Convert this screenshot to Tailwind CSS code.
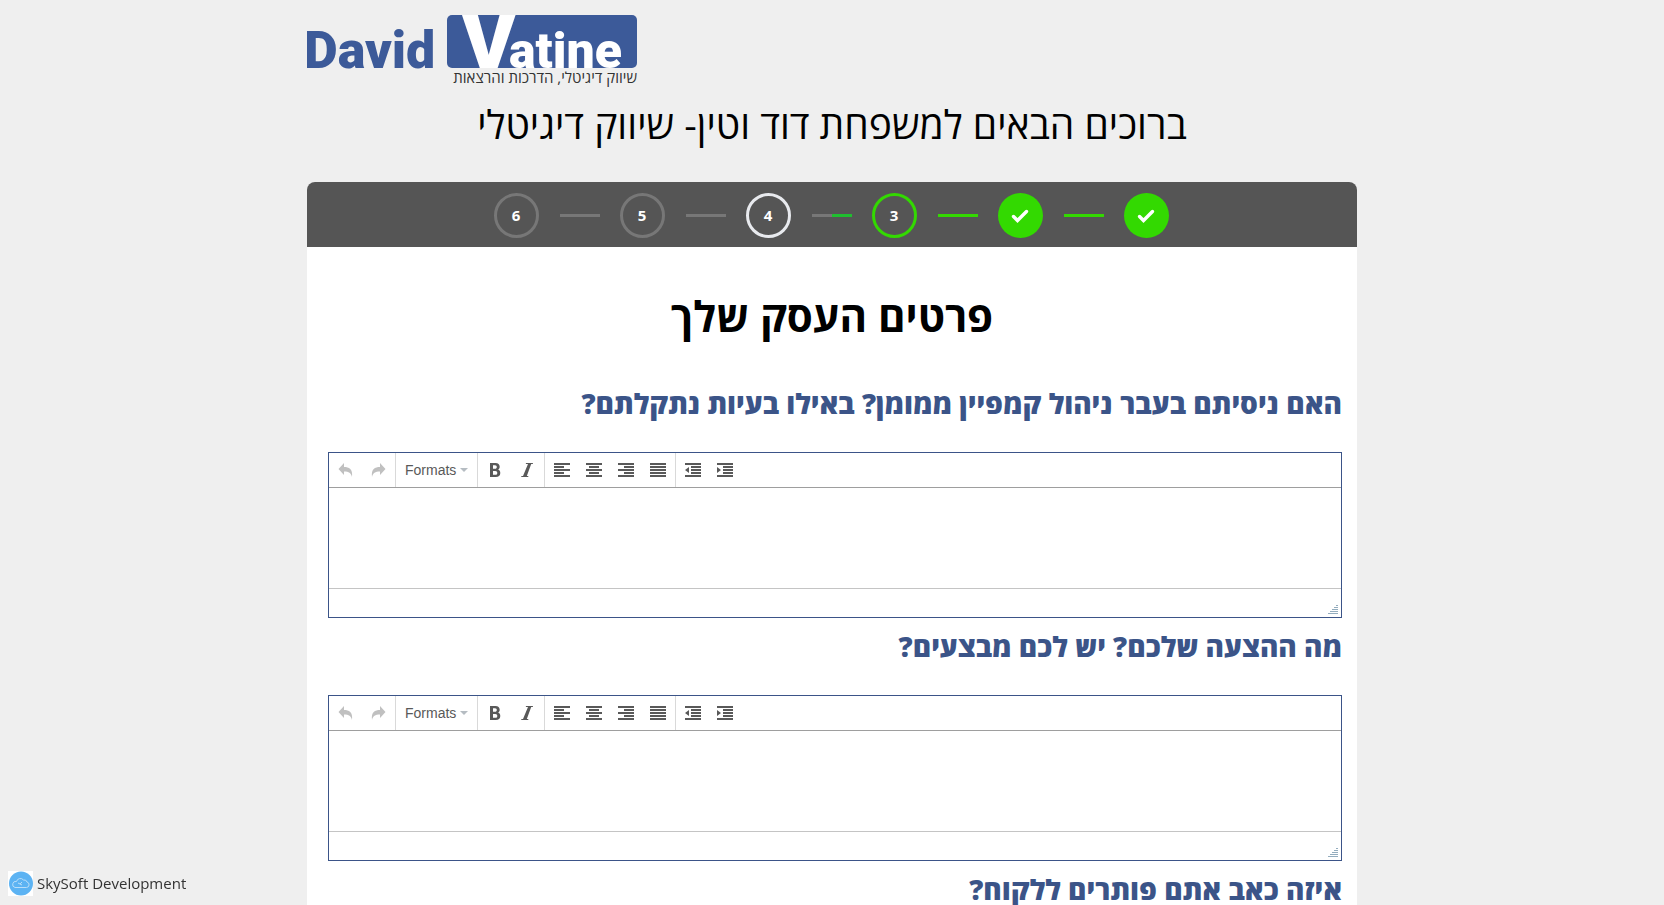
<!DOCTYPE html>
<html lang="he" dir="rtl">
<head>
<meta charset="utf-8">
<title>David Vatine</title>
<script src="https://cdn.jsdelivr.net/npm/@tailwindcss/browser@4"></script>
</head>
<body class="min-h-screen overflow-x-hidden bg-[#efefef] text-black font-['Open_Sans','Noto_Sans',sans-serif]">

<svg class="hidden" aria-hidden="true">
  <symbol id="undo" viewBox="0 0 16 16"><path d="M6 1v4c5 0 9 2 8 10-1-4-3-5.500-8-5.500V13L.5 7z"/></symbol>
  <symbol id="redo" viewBox="0 0 16 16"><path d="M10 1v4C5 5 1 7 2 15c1-4 3-5.500 8-5.500V13l5.500-6z"/></symbol>
  <symbol id="bold" viewBox="0 0 16 16"><path fill-rule="evenodd" d="M3 1h5.500c2.700 0 4.200 1.500 4.200 3.700 0 1.300-.6 2.300-1.700 2.900 1.500.5 2.300 1.700 2.300 3.300 0 2.600-1.700 4.100-4.500 4.100H3zM6 3.200v3.600h2c1.200 0 1.800-.7 1.800-1.800S9.200 3.200 8 3.200zM6 8.900v3.900h2.300c1.300 0 2-.7 2-1.900 0-1.300-.7-2-2-2z"/></symbol>
  <symbol id="italic" viewBox="0 0 16 16"><path d="M7 1h7l-.2 1h-1.600L7.800 14h1.600l-.2 1h-7l.2-1H4L9 2H6.800z"/></symbol>
  <symbol id="left" viewBox="0 0 16 14"><path d="M0 0h16v2H0zM0 3h10v2H0zM0 6h16v2H0zM0 9h10v2H0zM0 12h16v2H0z"/></symbol>
  <symbol id="center" viewBox="0 0 16 14"><path d="M0 0h16v2H0zM3 3h10v2H3zM0 6h16v2H0zM3 9h10v2H3zM0 12h16v2H0z"/></symbol>
  <symbol id="right" viewBox="0 0 16 14"><path d="M0 0h16v2H0zM6 3h10v2H6zM0 6h16v2H0zM6 9h10v2H6zM0 12h16v2H0z"/></symbol>
  <symbol id="justify" viewBox="0 0 16 14"><path d="M0 0h16v2H0zM0 3h16v2H0zM0 6h16v2H0zM0 9h16v2H0zM0 12h16v2H0z"/></symbol>
  <symbol id="outdent" viewBox="0 0 16 14"><path d="M0 0h16v2H0zM6 3h10v2H6zM6 6h10v2H6zM6 9h10v2H6zM0 12h16v2H0zM4 4v6L0 7z"/></symbol>
  <symbol id="indent" viewBox="0 0 16 14"><path d="M0 0h16v2H0zM6 3h10v2H6zM6 6h10v2H6zM6 9h10v2H6zM0 12h16v2H0zM0 4v6l4-3z"/></symbol>
  <symbol id="check" viewBox="0 0 18 14"><path d="M2.500 7.500l4 4 9-9" fill="none" stroke="#fff" stroke-width="3.400" stroke-linecap="round"/></symbol>
  <symbol id="grip" viewBox="0 0 10 10"><path d="M8 .5h2M6 2.500h4M4 4.500h6M2 6.500h8M0 8.500h10" stroke="#94adbe"/></symbol>
</svg>

<main class="mx-auto w-full max-w-[1050px]">
  <header>
    <div class="flex justify-end pt-[15px]">
      <a href="#" aria-label="David Vatine" class="block">
        <svg width="331" height="72" viewBox="0 0 331 72" direction="ltr" class="block font-['Roboto',sans-serif]">
          <defs><clipPath id="card"><rect x="140" y="0" width="190" height="53"/></clipPath></defs>
          <text x="-3" y="53" font-size="52" font-weight="900" fill="#3c5a99">David</text>
          <rect x="140" y="0" width="190" height="53" rx="5" fill="#3c5a99"/>
          <g clip-path="url(#card)" fill="#fff">
            <text x="154" y="56" font-size="84" font-weight="900">V</text>
            <text x="202" y="53" font-size="50" font-weight="900">atine</text>
          </g>
          <text x="330" y="68" font-size="15" fill="#333" direction="rtl" class="font-['Open_Sans',sans-serif]">שיווק דיגיטלי, הדרכות והרצאות</text>
        </svg>
      </a>
    </div>
    <h1 class="pt-3 text-center text-[39px] leading-[50px]">ברוכים הבאים למשפחת דוד וטין- שיווק דיגיטלי</h1>
  </header>

  <section class="mt-[33px] rounded-t-lg bg-white">
    <ol class="flex h-[65px] items-center justify-center rounded-t-lg bg-[#555] pt-0.5 pr-0.5 text-[15px] font-bold text-white">
      <li class="flex size-[45px] items-center justify-center rounded-full bg-[#33d901]"><svg class="h-[14px] w-[18px]" role="img" aria-label="1"><use href="#check"/></svg></li>
      <li aria-hidden="true" class="ml-[21px] mr-5 h-[3px] w-10 bg-[#33d901]"></li>
      <li class="flex size-[45px] items-center justify-center rounded-full bg-[#33d901]"><svg class="h-[14px] w-[18px]" role="img" aria-label="2"><use href="#check"/></svg></li>
      <li aria-hidden="true" class="ml-[21px] mr-5 h-[3px] w-10 bg-[#33d901]"></li>
      <li class="flex size-[45px] items-center justify-center rounded-full border-3 border-[#33d901]">3</li>
      <li aria-hidden="true" class="ml-[21px] mr-5 flex h-[3px] w-10 bg-[#777]"><span class="w-1/2 bg-[#1fbf2f]"></span></li>
      <li aria-current="step" class="flex size-[45px] items-center justify-center rounded-full border-3 border-[#e8eaee]">4</li>
      <li aria-hidden="true" class="ml-[21px] mr-5 h-[3px] w-10 bg-[#777]"></li>
      <li class="flex size-[45px] items-center justify-center rounded-full border-3 border-[#777]">5</li>
      <li aria-hidden="true" class="ml-[21px] mr-5 h-[3px] w-10 bg-[#777]"></li>
      <li class="flex size-[45px] items-center justify-center rounded-full border-3 border-[#777]">6</li>
    </ol>

    <h2 class="pt-[38px] pb-[34px] text-center text-[42px] leading-[62px] font-bold">פרטים העסק שלך</h2>
    <form class="pr-[15px] pl-[21px] pb-10">
      <div class="h-[243px]">
        <label for="q1" class="block h-[71px] pt-0.5 text-[28px] leading-[40px] font-extrabold text-[#3b5488]">האם ניסיתם בעבר ניהול קמפיין ממומן? באילו בעיות נתקלתם?</label>
        <div dir="ltr" class="flex h-[166px] flex-col border border-[#3b5488] bg-white">
          <div class="flex h-[35px] shrink-0 border-b border-[#9e9e9e] fill-[#595959] font-['Liberation_Sans',sans-serif] text-sm text-[#595959]">
            <div class="flex items-center border-r border-[#d9d9d9] px-px fill-[#c0c0c0]">
              <button type="button" aria-label="Undo" class="flex w-8 justify-center"><svg class="size-4"><use href="#undo"/></svg></button>
              <button type="button" aria-label="Redo" class="flex w-8 justify-center"><svg class="size-4"><use href="#redo"/></svg></button>
            </div>
            <div class="flex items-center border-r border-[#d9d9d9] px-[9px]">
              <button type="button" class="flex items-center gap-1">Formats <span class="border-x-4 border-t-4 border-x-transparent border-t-[#b5bcc2]"></span></button>
            </div>
            <div class="flex items-center border-r border-[#d9d9d9] px-px">
              <button type="button" aria-label="Bold" class="flex w-8 justify-center"><svg class="size-4"><use href="#bold"/></svg></button>
              <button type="button" aria-label="Italic" class="flex w-8 justify-center"><svg class="size-4"><use href="#italic"/></svg></button>
            </div>
            <div class="flex items-center border-r border-[#d9d9d9] px-px">
              <button type="button" aria-label="Align left" class="flex w-8 justify-center"><svg class="h-[14px] w-4"><use href="#left"/></svg></button>
              <button type="button" aria-label="Align center" class="flex w-8 justify-center"><svg class="h-[14px] w-4"><use href="#center"/></svg></button>
              <button type="button" aria-label="Align right" class="flex w-8 justify-center"><svg class="h-[14px] w-4"><use href="#right"/></svg></button>
              <button type="button" aria-label="Justify" class="flex w-8 justify-center"><svg class="h-[14px] w-4"><use href="#justify"/></svg></button>
            </div>
            <div class="flex items-center px-px">
              <button type="button" aria-label="Decrease indent" class="flex w-8 justify-center"><svg class="h-[14px] w-4"><use href="#outdent"/></svg></button>
              <button type="button" aria-label="Increase indent" class="flex w-8 justify-center"><svg class="h-[14px] w-4"><use href="#indent"/></svg></button>
            </div>
          </div>
          <textarea id="q1" dir="rtl" class="block w-full grow resize-none p-2 text-sm outline-none"></textarea>
          <div class="flex h-[29px] shrink-0 items-end justify-end border-t border-[#c4c4c4] pr-[3px] pb-[2px]"><svg class="size-[10px]"><use href="#grip"/></svg></div>
        </div>
      </div>

      <div class="h-[243px]">
        <label for="q2" class="block h-[71px] pt-0.5 text-[28px] leading-[40px] font-extrabold text-[#3b5488]">מה ההצעה שלכם? יש לכם מבצעים?</label>
        <div dir="ltr" class="flex h-[166px] flex-col border border-[#3b5488] bg-white">
          <div class="flex h-[35px] shrink-0 border-b border-[#9e9e9e] fill-[#595959] font-['Liberation_Sans',sans-serif] text-sm text-[#595959]">
            <div class="flex items-center border-r border-[#d9d9d9] px-px fill-[#c0c0c0]">
              <button type="button" aria-label="Undo" class="flex w-8 justify-center"><svg class="size-4"><use href="#undo"/></svg></button>
              <button type="button" aria-label="Redo" class="flex w-8 justify-center"><svg class="size-4"><use href="#redo"/></svg></button>
            </div>
            <div class="flex items-center border-r border-[#d9d9d9] px-[9px]">
              <button type="button" class="flex items-center gap-1">Formats <span class="border-x-4 border-t-4 border-x-transparent border-t-[#b5bcc2]"></span></button>
            </div>
            <div class="flex items-center border-r border-[#d9d9d9] px-px">
              <button type="button" aria-label="Bold" class="flex w-8 justify-center"><svg class="size-4"><use href="#bold"/></svg></button>
              <button type="button" aria-label="Italic" class="flex w-8 justify-center"><svg class="size-4"><use href="#italic"/></svg></button>
            </div>
            <div class="flex items-center border-r border-[#d9d9d9] px-px">
              <button type="button" aria-label="Align left" class="flex w-8 justify-center"><svg class="h-[14px] w-4"><use href="#left"/></svg></button>
              <button type="button" aria-label="Align center" class="flex w-8 justify-center"><svg class="h-[14px] w-4"><use href="#center"/></svg></button>
              <button type="button" aria-label="Align right" class="flex w-8 justify-center"><svg class="h-[14px] w-4"><use href="#right"/></svg></button>
              <button type="button" aria-label="Justify" class="flex w-8 justify-center"><svg class="h-[14px] w-4"><use href="#justify"/></svg></button>
            </div>
            <div class="flex items-center px-px">
              <button type="button" aria-label="Decrease indent" class="flex w-8 justify-center"><svg class="h-[14px] w-4"><use href="#outdent"/></svg></button>
              <button type="button" aria-label="Increase indent" class="flex w-8 justify-center"><svg class="h-[14px] w-4"><use href="#indent"/></svg></button>
            </div>
          </div>
          <textarea id="q2" dir="rtl" class="block w-full grow resize-none p-2 text-sm outline-none"></textarea>
          <div class="flex h-[29px] shrink-0 items-end justify-end border-t border-[#c4c4c4] pr-[3px] pb-[2px]"><svg class="size-[10px]"><use href="#grip"/></svg></div>
        </div>
      </div>

      <h3 class="pt-0.5 text-[28px] leading-[40px] font-extrabold text-[#3b5488]">איזה כאב אתם פותרים ללקוח?</h3>
    </form>
  </section>
</main>

<a href="#" dir="ltr" class="fixed bottom-[9px] left-2 flex items-center gap-1 text-[15px] text-[#333]">
  <svg width="25" height="25" viewBox="0 0 25 25"><path fill="#fff" d="M0 0h25v25H0z"/><circle cx="13" cy="12.500" r="12" fill="#5cb3f3"/><path d="M7 16.500h11.500a2.800 2.800 0 0 0 .5-5.500 3 3 0 0 0-3.500-2 4 4 0 0 0-7 1.500A3 3 0 0 0 7 16.500z" fill="none" stroke="#b9def9"/><path d="M10 12l2 1 2-2M12 13l2 1" stroke="#b9def9" fill="none"/></svg>
  SkySoft Development
</a>
</body>
</html>
